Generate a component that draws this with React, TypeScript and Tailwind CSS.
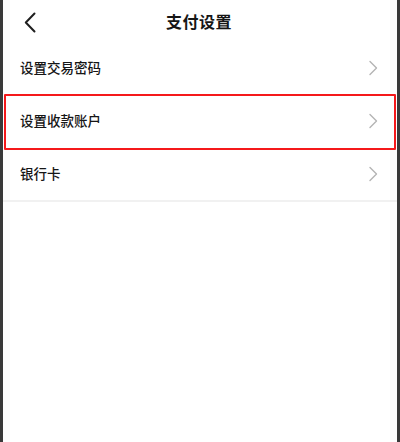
import React from 'react';

const rows = [
  { name: '设置交易密码' },
  { name: '设置收款账户', marked: true },
  { name: '银行卡' },
];

function Chevron() {
  return (
    <svg width="10" height="16" viewBox="0 0 10 16" fill="none" className="shrink-0">
      <path d="M2 1.5 L8.5 8 L2 14.5" stroke="#b4b4b4" strokeWidth="1.4" strokeLinecap="round" strokeLinejoin="round" />
    </svg>
  );
}

export default function App() {
  return (
    <div
      className="flex w-[400px] h-[442px] bg-white text-[#161616]"
      style={{ fontFamily: '"Noto Sans CJK SC", "Noto Sans", sans-serif' }}
    >
      <div className="w-[3px] bg-[#3a3a3a]" />
      <div className="relative flex-1 flex flex-col">
        {/* header */}
        <div className="relative flex items-center justify-center h-[41px]">
          <button type="button" className="absolute left-[17px] top-[8px] p-1" aria-label="返回">
            <svg width="12" height="21" viewBox="0 0 12 21" fill="none">
              <path d="M10.5 1.5 L1.8 10.5 L10.5 19.5" stroke="#1f1f1f" strokeWidth="2" strokeLinecap="round" strokeLinejoin="round" />
            </svg>
          </button>
          <h1 className="text-[16px] font-bold leading-none tracking-[0.5px] -ml-[2px]">支付设置</h1>
        </div>

        {/* list */}
        <div className="flex flex-col border-b-2 border-[#f1f1f1]">
          {rows.map((row) => (
            <div key={row.name} className="flex items-center justify-between h-[53px] pl-[17px] pr-[19px]">
              <span className="text-[13.5px] font-medium leading-none">{row.name}</span>
              <Chevron />
            </div>
          ))}
        </div>

        {/* annotation box */}
        <div className="absolute left-[1px] top-[94px] w-[392px] h-[56px] border-2 border-[#f5191b] rounded-[1px]" />
      </div>
      <div className="w-[3px] bg-[#3a3a3a]" />
    </div>
  );
}
